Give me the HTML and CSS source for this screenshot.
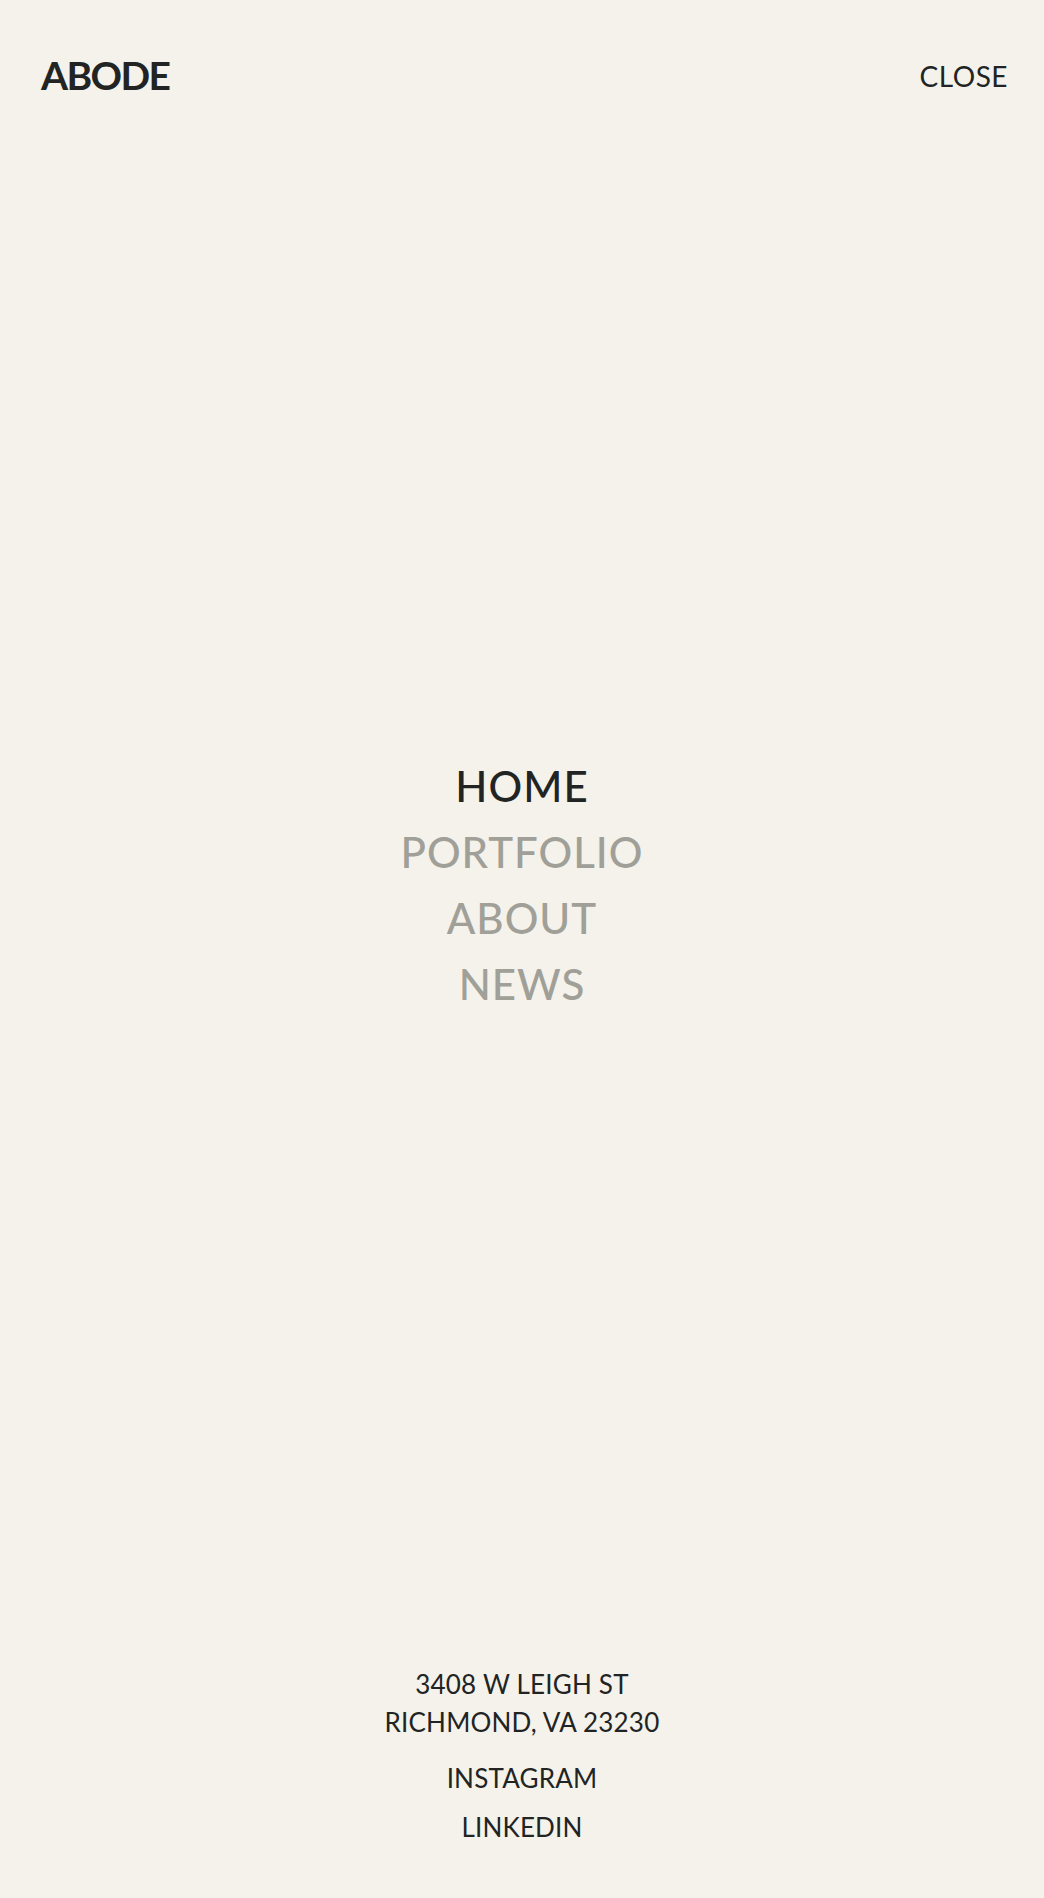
FILE: index.html
```html
<!DOCTYPE html>
<html lang="en">
<head>
<meta charset="utf-8">
<title>Abode</title>
<link rel="stylesheet" href="styles.css">
</head>
<body>
<div class="page">
  <header class="header">
    <a class="logo" href="#">ABODE</a>
    <a class="close" href="#">CLOSE</a>
  </header>
  <main class="menu">
    <nav class="nav">
      <a class="nav-link active" href="#">HOME</a>
      <a class="nav-link" href="#">PORTFOLIO</a>
      <a class="nav-link" href="#">ABOUT</a>
      <a class="nav-link" href="#">NEWS</a>
    </nav>
  </main>
  <footer class="footer">
    <address class="address">3408 W LEIGH ST<br>RICHMOND, VA 23230</address>
    <a class="social" href="#">INSTAGRAM</a>
    <a class="social social-last" href="#">LINKEDIN</a>
  </footer>
</div>
</body>
</html>
```

FILE: styles.css
```css
html, body {
  margin: 0;
  padding: 0;
  background: #f4f2ea;
}
body {
  font-family: "Lato", "Liberation Sans", sans-serif;
  color: #222424;
}
a {
  color: inherit;
  text-decoration: none;
}
.page {
  min-height: 100vh;
  display: flex;
  flex-direction: column;
}
.header {
  display: flex;
  justify-content: space-between;
  align-items: center;
  padding: 52px 36px 6px 41px;
}
.logo {
  font-size: 39px;
  line-height: 47px;
  font-weight: 700;
  letter-spacing: -1.6px;
}
.close {
  font-size: 28px;
  line-height: 34px;
  font-weight: 400;
  letter-spacing: 0.5px;
}
.menu {
  flex: 1;
  display: flex;
  align-items: center;
  justify-content: center;
}
.nav {
  display: flex;
  flex-direction: column;
  align-items: center;
}
.nav-link {
  font-size: 42px;
  line-height: 66px;
  font-weight: 500;
  letter-spacing: 1px;
  color: #a09f98;
}
.nav-link.active {
  color: #222424;
}
.footer {
  display: flex;
  flex-direction: column;
  align-items: center;
  padding-bottom: 52px;
  font-size: 26px;
  line-height: 38px;
  letter-spacing: 0.2px;
}
.address {
  font-style: normal;
  text-align: center;
  margin-bottom: 18px;
}
.social {
  margin-bottom: 11px;
}
.social-last {
  margin-bottom: 0;
}
```
